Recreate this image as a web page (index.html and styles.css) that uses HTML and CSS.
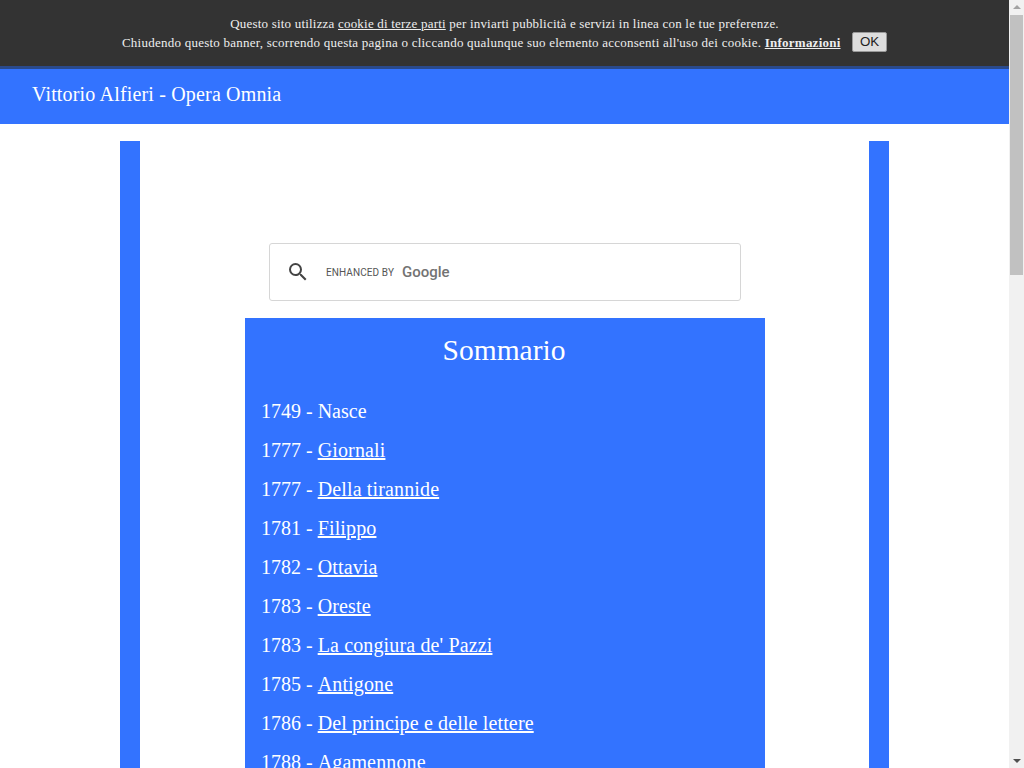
FILE: index.html
```html
<!DOCTYPE html>
<html lang="it">

<head>
    <meta charset="UTF-8">
    <title>Vittorio Alfieri - Opera Omnia</title>
    <link rel="stylesheet" href="styles.css">
</head>

<body>
    <div class="page">
        <div class="cookie">
            <p class="first">Questo sito utilizza <a href="#">cookie di terze parti</a> per inviarti pubblicità e servizi in linea con le tue preferenze.</p>
            <p>Chiudendo questo banner, scorrendo questa pagina o cliccando qualunque suo elemento acconsenti all'uso dei cookie. <a href="#" class="info">Informazioni</a> <button class="ok">OK</button></p>
        </div>

        <div class="header">Vittorio Alfieri - Opera Omnia</div>

        <div class="content">
            <div class="search">
                <svg class="lens" width="24" height="24" viewBox="0 0 24 24">
                    <path fill="#444" d="M15.5 14h-.79l-.28-.27A6.47 6.47 0 0 0 16 9.5 6.5 6.5 0 1 0 9.5 16c1.61 0 3.09-.59 4.23-1.57l.27.28v.79l5 4.99L20.49 19l-4.99-5zm-6 0C7.01 14 5 11.99 5 9.5S7.01 5 9.5 5 14 7.01 14 9.5 11.99 14 9.5 14z"/>
                </svg>
                <span class="enhanced">ENHANCED BY</span>
                <span class="google">Google</span>
            </div>

            <div class="sommario">
                <h1>Sommario</h1>
                <ul>
                    <li>1749 - Nasce</li>
                    <li>1777 - <a href="#">Giornali</a></li>
                    <li>1777 - <a href="#">Della tirannide</a></li>
                    <li>1781 - <a href="#">Filippo</a></li>
                    <li>1782 - <a href="#">Ottavia</a></li>
                    <li>1783 - <a href="#">Oreste</a></li>
                    <li>1783 - <a href="#">La congiura de' Pazzi</a></li>
                    <li>1785 - <a href="#">Antigone</a></li>
                    <li>1786 - <a href="#">Del principe e delle lettere</a></li>
                    <li>1788 - <a href="#">Agamennone</a></li>
                </ul>
            </div>
        </div>
    </div>

    <div class="scrollbar">
        <div class="arrow-up"></div>
        <div class="thumb"></div>
        <div class="arrow-down"></div>
    </div>
</body>

</html>
```

FILE: styles.css
```css
* {
    margin: 0;
    padding: 0;
    box-sizing: border-box;
}

html, body {
    height: 100%;
    overflow: hidden;
}

body {
    display: flex;
    font-family: "Liberation Serif", serif;
    background-color: #fff;
}

.page {
    flex: 1;
    min-width: 0;
    height: 768px;
    overflow: hidden;
}

.cookie {
    height: 69px;
    padding-top: 14px;
    border-bottom: 3px solid #2a4a8c;
    background-color: #333;
    color: #eee;
    font-size: 13px;
    letter-spacing: 0.24px;
    line-height: 19px;
    text-align: center;
}

.cookie p {
    height: 19px;
}

.cookie .first {
    letter-spacing: 0.2px;
}

.cookie a {
    color: #eee;
}

.cookie .info {
    font-weight: bold;
}

.ok {
    margin: -3px 0 -3px 8px;
    padding: 0 6px;
    width: 35px;
    height: 20px;
    border: 1px solid #999;
    border-radius: 2px;
    background-color: #ddd;
    color: #222;
    font-family: "Liberation Sans", sans-serif;
    font-size: 13.33px;
    letter-spacing: 0;
    vertical-align: 1px;
}

.header {
    height: 55px;
    padding: 14px 32px;
    background-color: #3373ff;
    color: #fff;
    font-size: 20px;
    letter-spacing: 0.17px;
    line-height: 23px;
}

.content {
    width: 769px;
    height: 700px;
    margin: 17px 0 0 120px;
    padding: 102px 104px 0 105px;
    border-left: 20px solid #3373ff;
    border-right: 20px solid #3373ff;
}

.search {
    display: flex;
    align-items: center;
    width: 472px;
    height: 58px;
    margin: 0 auto 17px;
    padding-left: 16px;
    border: 1px solid #d6d6d6;
    border-radius: 3px;
}

.enhanced {
    margin-left: 16px;
    color: #555;
    font-family: "Roboto", sans-serif;
    font-size: 10px;
    letter-spacing: 0.1px;
}

.google {
    margin-left: 8px;
    color: #737373;
    font-family: "Roboto", sans-serif;
    font-size: 15px;
    font-weight: 500;
}

.sommario {
    width: 520px;
    padding: 15px 16px 16px;
    background-color: #3373ff;
    color: #fff;
}

.sommario h1 {
    margin-bottom: 33px;
    padding-right: 2px;
    font-size: 29.5px;
    font-weight: normal;
    line-height: 34px;
    text-align: center;
}

.sommario ul {
    list-style: none;
}

.sommario li {
    height: 39px;
    font-size: 20px;
    line-height: 23px;
}

.sommario a {
    color: #fff;
    letter-spacing: 0.14px;
}

.scrollbar {
    display: flex;
    flex-direction: column;
    flex: none;
    width: 15px;
    height: 768px;
    background-color: #f1f1f1;
}

.arrow-up, .arrow-down {
    width: 0;
    height: 0;
    margin: 5px auto 0;
    border-left: 4px solid transparent;
    border-right: 4px solid transparent;
}

.arrow-up {
    border-bottom: 4px solid #a3a3a3;
}

.arrow-down {
    margin: auto auto 5px;
    border-top: 4px solid #505050;
}

.thumb {
    width: 13px;
    height: 260px;
    margin: 6px 1px 0;
    background-color: #c1c1c1;
}
```
